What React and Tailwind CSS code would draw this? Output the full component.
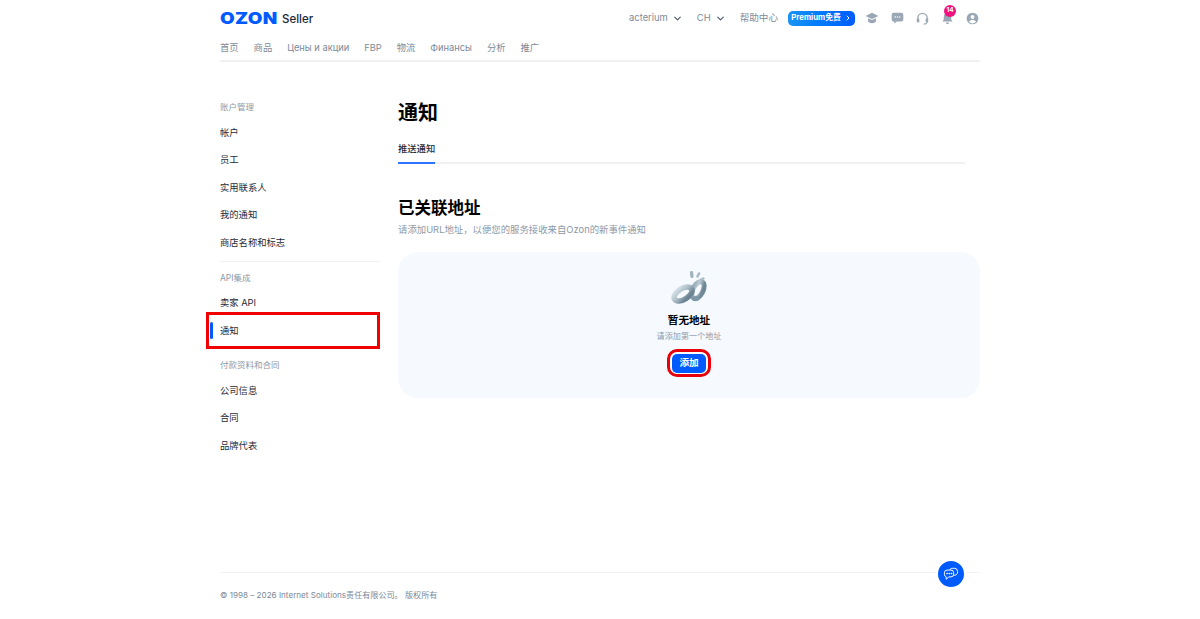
import React from "react";
import { ChevronDown, ChevronRight } from "lucide-react";

const navItems = ["首页", "商品", "Цены и акции", "FBP", "物流", "Финансы", "分析", "推广"];

const SideLabel = ({ children }) => (
  <p className="h-[20px] flex items-center text-[8.5px] text-[#8d99a8]">{children}</p>
);

const SideLink = ({ children }) => (
  <a className="h-[27.5px] flex items-center text-[9.3px] text-[#1f2a36]">{children}</a>
);

const CapIcon = () => (
  <svg viewBox="0 0 16 14" className="w-[14px] h-[12px]" fill="#9aa7b5">
    <path d="M8 1 15.5 4.6 8 8.2.5 4.6Z" />
    <path d="M3.4 7.2 8 9.4l4.6-2.2v3.3C12.6 12 10.5 13 8 13s-4.6-1-4.6-2.5Z" />
  </svg>
);

const ChatIcon = () => (
  <svg viewBox="0 0 14 13" className="w-[13px] h-[12px]">
    <path d="M3 .8h8A2.3 2.3 0 0 1 13.3 3v5A2.3 2.3 0 0 1 11 10.3H6.2L3.3 12.5v-2.2A2.3 2.3 0 0 1 .7 8V3A2.3 2.3 0 0 1 3 .8Z" fill="#9aa7b5" />
    <circle cx="4.5" cy="5.5" r=".8" fill="#fff" />
    <circle cx="7" cy="5.5" r=".8" fill="#fff" />
    <circle cx="9.5" cy="5.5" r=".8" fill="#fff" />
  </svg>
);

const HeadsetIcon = () => (
  <svg viewBox="0 0 14 14" className="w-[13px] h-[13px]" fill="none">
    <path d="M2 8V6.5a5 5 0 0 1 10 0V8" stroke="#9aa7b5" strokeWidth="1.5" />
    <rect x=".8" y="7" width="2.8" height="4.3" rx="1.2" fill="#9aa7b5" />
    <rect x="10.4" y="7" width="2.8" height="4.3" rx="1.2" fill="#9aa7b5" />
    <path d="M11.8 11c0 1.5-1.5 2-3.5 2" stroke="#9aa7b5" strokeWidth="1.2" />
  </svg>
);

const BellIcon = () => (
  <svg viewBox="0 0 14 14" className="w-[13px] h-[13px]" fill="#9aa7b5">
    <path d="M7 1a4 4 0 0 0-4 4v3L1.6 10.3h10.8L11 8V5a4 4 0 0 0-4-4Z" />
    <path d="M5.2 11.3h3.6A1.9 1.9 0 0 1 7 13a1.9 1.9 0 0 1-1.8-1.7Z" />
  </svg>
);

const UserIcon = () => (
  <svg viewBox="0 0 14 14" className="w-[13px] h-[13px]">
    <circle cx="7" cy="7" r="6.3" fill="#9aa7b5" />
    <circle cx="7" cy="5.4" r="2.1" fill="#fff" />
    <path d="M3.2 10.6C4 9.2 5.4 8.7 7 8.7s3 .5 3.8 1.9A5 5 0 0 1 7 12.3a5 5 0 0 1-3.8-1.7Z" fill="#fff" />
  </svg>
);

const ChainPicture = () => (
  <svg viewBox="0 0 38 36" className="w-[38px] h-[36px]" fill="none">
    <defs>
      <linearGradient id="chainA" x1="0" y1="0" x2="0.5" y2="1">
        <stop offset="0" stopColor="#d7e2e8" />
        <stop offset="0.55" stopColor="#a9bbc5" />
        <stop offset="1" stopColor="#6d8593" />
      </linearGradient>
      <linearGradient id="chainB" x1="0" y1="0" x2="0.3" y2="1">
        <stop offset="0" stopColor="#92a8b4" />
        <stop offset="0.5" stopColor="#bccbd3" />
        <stop offset="1" stopColor="#6f8795" />
      </linearGradient>
    </defs>
    <ellipse cx="28" cy="20" rx="9" ry="5" transform="rotate(-62 28 20)" stroke="url(#chainB)" strokeWidth="5" />
    <ellipse cx="13" cy="24" rx="10" ry="5.5" transform="rotate(-32 13 24)" stroke="url(#chainA)" strokeWidth="5.5" />
    <path d="M24 28.5c1 .4 2 .4 3 0" stroke="#7f98a5" strokeWidth="5" strokeLinecap="round" />
    <path d="M21.5 2.5 22 6.5" stroke="#9fb3be" strokeWidth="3.2" strokeLinecap="round" />
    <path d="M29 3.5 27.5 6.5" stroke="#a9bcc6" strokeWidth="2.6" strokeLinecap="round" />
    <path d="M33.500 8.500 31 9.500" stroke="#a9bcc6" strokeWidth="2.4" strokeLinecap="round" />
  </svg>
);

const Header = () => (
  <header className="h-[62px] border-b-2 border-[#eef0f3]">
    <div className="h-[36px] flex items-center justify-between">
      <div className="flex items-center">
        <span className="w-[57px] text-[16px] leading-none font-black text-[#005bff] tracking-[0.3px] origin-left scale-x-[1.18] whitespace-nowrap">
          OZON
        </span>
        <span className="ml-[5px] mt-[3px] text-[11.5px] font-medium text-[#1c2733]">Seller</span>
      </div>
      <div className="flex items-center text-[9.4px] text-[#7d8a99]">
        <span>acterium</span>
        <ChevronDown className="ml-[4px] w-[11px] h-[11px] text-[#4a5866]" strokeWidth={2.5} />
        <span className="ml-[14px]">CH</span>
        <ChevronDown className="ml-[4px] w-[11px] h-[11px] text-[#4a5866]" strokeWidth={2.5} />
        <span className="ml-[14px] text-[9.6px]">帮助中心</span>
        <button className="ml-[10px] h-[15px] w-[67px] flex items-center justify-center gap-[3px] rounded-[5px] bg-gradient-to-r from-[#1b93f5] to-[#005bff] text-[7.8px] font-bold text-white">
          Premium免费
          <ChevronRight className="w-[8px] h-[8px]" strokeWidth={3} />
        </button>
        <div className="ml-[10px] mr-[1px] flex items-center gap-[12px]">
          <CapIcon />
          <ChatIcon />
          <HeadsetIcon />
          <div className="relative">
            <BellIcon />
            <span className="absolute -top-[7px] left-[3px] w-[12px] h-[12px] flex items-center justify-center rounded-full bg-[#f1117e] text-[6.5px] font-bold text-white">
              14
            </span>
          </div>
          <UserIcon />
        </div>
      </div>
    </div>
    <nav className="h-[24px] flex items-center gap-[15px] text-[9.3px] text-[#7d8a99]">
      {navItems.map((item) => (
        <a key={item}>{item}</a>
      ))}
    </nav>
  </header>
);

const Sidebar = () => (
  <aside className="w-[160px] shrink-0 pt-[35px]">
    <SideLabel>账户管理</SideLabel>
    <div className="mt-[2px]">
      <SideLink>帐户</SideLink>
      <SideLink>员工</SideLink>
      <SideLink>实用联系人</SideLink>
      <SideLink>我的通知</SideLink>
      <SideLink>商店名称和标志</SideLink>
    </div>
    <div className="mt-[4px] mb-[7px] h-px bg-[#eef0f3]" />
    <SideLabel>API集成</SideLabel>
    <div className="mt-[1px]">
      <SideLink>卖家 API</SideLink>
      <div className="relative">
        <SideLink>通知</SideLink>
        <span className="absolute -left-[10px] top-[5px] w-[3px] h-[17px] rounded-full bg-[#005bff]" />
        <span className="absolute -left-[14px] right-0 -top-[5px] h-[37px] border-[3px] border-[#f00000]" />
      </div>
    </div>
    <div className="mt-[11px]">
      <SideLabel>付款资料和合同</SideLabel>
    </div>
    <div className="mt-[1.5px]">
      <SideLink>公司信息</SideLink>
      <SideLink>合同</SideLink>
      <SideLink>品牌代表</SideLink>
    </div>
  </aside>
);

const Main = () => (
  <main className="ml-[18px] flex-1 pt-[37px]">
    <h1 className="h-[28px] flex items-center text-[20px] font-bold text-black">通知</h1>
    <div className="mt-[7px] mr-[15px] h-[30px] border-b-2 border-[#eef0f3]">
      <span className="inline-flex h-[30px] items-center pt-[1px] border-b-2 border-[#2f74ff] text-[9.3px] font-medium text-[#1f2a36]">
        推送通知
      </span>
    </div>
    <h2 className="mt-[33px] h-[22px] flex items-center text-[16.5px] font-bold text-black">已关联地址</h2>
    <p className="mt-[3px] h-[16px] flex items-center text-[9.4px] text-[#8d99a8]">
      请添加URL地址，以便您的服务接收来自Ozon的新事件通知
    </p>
    <section className="mt-[14px] h-[146px] rounded-[20px] bg-[#f6fafe] pt-[18px] flex flex-col items-center">
      <ChainPicture />
      <p className="mt-[7px] h-[16px] flex items-center text-[10.6px] font-bold text-black">暂无地址</p>
      <p className="mt-[1px] h-[12px] flex items-center text-[8.1px] text-[#8d99a8]">请添加第一个地址</p>
      <div className="mt-[7px] px-[2px] py-[1.5px] rounded-[10px] border-[3px] border-[#e8000b] bg-white">
        <button className="w-[34px] h-[19px] flex items-center justify-center rounded-[5px] bg-[#005bff] text-[9.6px] font-semibold text-white">
          添加
        </button>
      </div>
    </section>
  </main>
);

const Footer = () => (
  <footer className="relative mt-auto h-[47px] border-t border-[#f1f3f5] pt-[15px] text-[8.1px] text-[#7d8a99]">
    <p className="h-[15px] flex items-center">© 1998 – 2026 Internet Solutions责任有限公司。 版权所有</p>
    <button className="absolute left-[716px] -top-[14px] w-[30px] h-[30px] flex items-center justify-center rounded-full border-[2.5px] border-white bg-[#005bff]">
      <svg viewBox="0 0 18 16" className="w-[16px] h-[14px]" fill="none" stroke="#fff" strokeWidth="1.1">
        <path d="M7.5 3.5h-3A3 3 0 0 0 1.5 6.5v2a3 3 0 0 0 2 2.8V14l3-2.7h2.5a3 3 0 0 0 3-3V6.5a3 3 0 0 0-3-3Z" />
        <path d="M7.5 3.5C8 2 9.5 1.5 11 1.5h2a3.5 3.5 0 0 1 3.5 3.5v1a3.5 3.5 0 0 1-4.5 3.3" />
        <circle cx="4.5" cy="7.5" r=".5" fill="#fff" />
        <circle cx="7" cy="7.5" r=".5" fill="#fff" />
        <circle cx="9.5" cy="7.5" r=".5" fill="#fff" />
      </svg>
    </button>
  </footer>
);

export default function App() {
  return (
    <div className="h-[619px] overflow-hidden bg-white font-['Inter','Noto_Sans_CJK_SC',sans-serif]">
      <div className="w-[760px] h-full mx-auto flex flex-col">
        <Header />
        <div className="flex">
          <Sidebar />
          <Main />
        </div>
        <Footer />
      </div>
    </div>
  );
}
